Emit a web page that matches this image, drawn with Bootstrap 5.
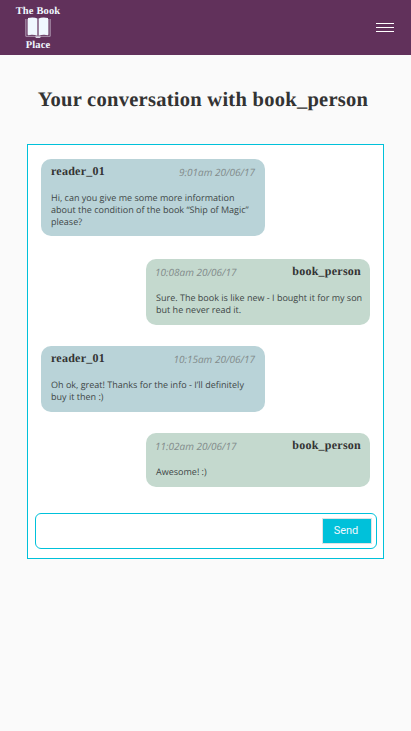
<!DOCTYPE html>
<html lang="en">
<head>
<meta charset="utf-8">
<meta name="viewport" content="width=device-width, initial-scale=1">
<title>The Book Place</title>
<link rel="stylesheet" href="https://cdn.jsdelivr.net/npm/bootstrap@5.3.0/dist/css/bootstrap.min.css">
<style>
body{background:#fafafa;color:#333;font-family:"Open Sans",sans-serif;text-rendering:geometricPrecision}
.serif{font-family:"Gentium Book Basic","Liberation Serif",serif;font-weight:700}
.topbar{height:55px;background:#61315b;padding:0 17px 0 15px}
.brand{width:46px;height:55px;color:#f0f8ff;font-size:10.5px;line-height:11px;padding-top:6px;white-space:nowrap;letter-spacing:.15px}
.brand svg{width:26px;height:22px;margin:0 0 1px}
.burger{width:18px;height:9px}
.burger span{height:1px;background:#fff}
.page-title{font-size:20.5px;line-height:26px;margin:32px 5px 31px 0;white-space:nowrap;letter-spacing:.27px}
.chat{margin:0 27px;height:415px;border:1px solid #00c1da;background:#fff;padding:14px 6px 9px 7px}
.thread{padding:0 7px 0 6px}
.bubble{width:224px;border-radius:10px;padding:6px 0 0 10px}
.bubble-in{background:#b9d3d8}
.bubble-out{background:#c4d9ce}
.bubble header{height:14px;padding-right:9px}
.bubble-in header{padding-right:10px}
.bubble-out header{margin-left:-1px}
.user{font-size:12px;line-height:13px;letter-spacing:.25px}
.stamp{font-size:10px;line-height:14px;font-style:italic;color:#828b8b;font-weight:400}
.bubble p{font-size:9.03px;line-height:12px;margin:13px 0 0;color:#404747;white-space:nowrap}
.h3l{height:77px}.h2l{height:66px}.h1l{height:54px}
.compose{height:36px;border:1px solid #00c1da;border-radius:6px;padding:4px 4px}
.compose input{font-size:10px;box-shadow:none!important}
.send{width:50px;height:26px;border:1px solid #dfe3e5;border-radius:0;background:#00c1da;color:#f0f8ff;font:400 11px/24px Roboto,sans-serif;padding:0 2px 0 0}
</style>
</head>
<body>
<nav class="topbar d-flex justify-content-between align-items-center">
  <a class="brand serif d-flex flex-column align-items-center text-decoration-none" href="#">
    <span>The Book</span>
    <svg viewBox="0 0 26 22" aria-hidden="true">
      <path d="M.8 2V19.3H25.2V2M2.3 2V17.8M23.7 2V17.8" fill="none" stroke="#b9a6bd" stroke-width=".9"/>
      <path d="M3 1Q9-.2 12.4 1.6V18.7Q8 17.2 3 18.2ZM23 1Q17-.2 13.6 1.6V18.7Q18 17.2 23 18.2Z" fill="#f0f8ff"/>
      <path d="M10 19.5H16L15 21H11Z" fill="#d9d5e3"/>
    </svg>
    <span>Place</span>
  </a>
  <div class="burger d-flex flex-column justify-content-between" role="button" aria-label="Menu"><span></span><span></span><span></span></div>
</nav>
<main>
  <h1 class="page-title serif text-center">Your conversation with book_person</h1>
  <section class="chat d-flex flex-column justify-content-between">
    <div class="thread d-flex flex-column">
      <article class="bubble bubble-in h3l">
        <header class="d-flex justify-content-between"><span class="user serif">reader_01</span><time class="stamp">9:01am 20/06/17</time></header>
        <p>Hi, can you give me some more information<br>about the condition of the book “Ship of Magic”<br>please?</p>
      </article>
      <article class="bubble bubble-out h2l align-self-end" style="margin-top:23px">
        <header class="d-flex justify-content-between"><time class="stamp">10:08am 20/06/17</time><span class="user serif">book_person</span></header>
        <p>Sure. The book is like new - I bought it for my son<br>but he never read it.</p>
      </article>
      <article class="bubble bubble-in h2l" style="margin-top:21px">
        <header class="d-flex justify-content-between"><span class="user serif">reader_01</span><time class="stamp">10:15am 20/06/17</time></header>
        <p>Oh ok, great! Thanks for the info - I’ll definitely<br>buy it then :)</p>
      </article>
      <article class="bubble bubble-out h1l align-self-end" style="margin-top:21px">
        <header class="d-flex justify-content-between"><time class="stamp">11:02am 20/06/17</time><span class="user serif">book_person</span></header>
        <p>Awesome! :)</p>
      </article>
    </div>
    <form class="compose d-flex align-items-center">
      <input class="form-control border-0 bg-transparent p-1" type="text" aria-label="Message">
      <button class="btn send flex-shrink-0" type="button">Send</button>
    </form>
  </section>
</main>
<script src="https://cdn.jsdelivr.net/npm/bootstrap@5.3.0/dist/js/bootstrap.bundle.min.js"></script>
</body>
</html>
